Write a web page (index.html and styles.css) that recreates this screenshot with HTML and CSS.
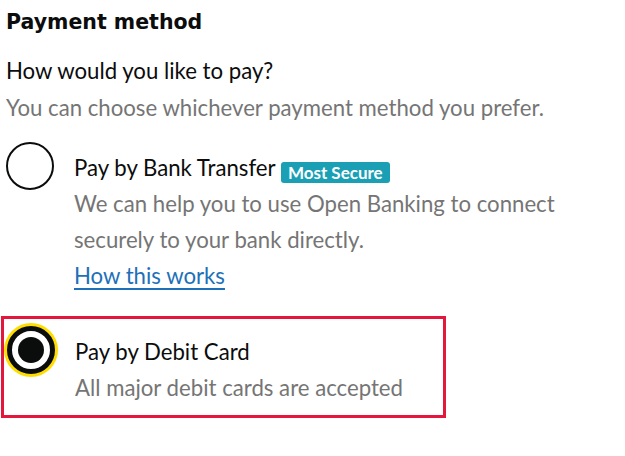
FILE: index.html
```html
<!DOCTYPE html>
<html lang="en">
<head>
  <meta charset="UTF-8" />
  <meta name="viewport" content="width=device-width, initial-scale=1.0"/>
  <title>Payment method</title>
  <link rel="stylesheet" href="styles.css">
</head>
<body>
  <div class="page">
    <h2 class="title">Payment method</h2>
    <p class="question">How would you like to pay?</p>
    <p class="hint">You can choose whichever payment method you prefer.</p>

    <div class="radios">
      <label class="radio">
        <span class="radio-mark"></span>
        <span class="radio-body">
          <span class="radio-label">Pay by Bank Transfer <span class="tag">Most Secure</span></span>
          <span class="radio-hint">We can help you to use Open Banking to connect securely to your bank directly.</span>
          <a class="link" href="#">How this works</a>
        </span>
      </label>

      <label class="radio is-selected">
        <span class="radio-mark"></span>
        <span class="radio-body">
          <span class="radio-label">Pay by Debit Card</span>
          <span class="radio-hint">All major debit cards are accepted</span>
        </span>
      </label>
    </div>
  </div>
</body>
</html>
```

FILE: styles.css
```css
* {
  margin: 0; padding: 0;
  box-sizing: border-box;
}

body {
  font-family: 'Lato', 'Noto Sans', sans-serif;
  color: #0b0c0c;
  background: #fff;
}

.page {
  padding: 8px 6px;
}

.title {
  font-family: 'DejaVu Sans', sans-serif;
  font-weight: bold;
  font-size: 20.5px;
  line-height: 28px;
}

.question {
  margin-top: 17px;
  font-size: 22.2px;
  line-height: 36px;
}

.hint {
  margin-top: 1px;
  font-size: 22.2px;
  line-height: 36px;
  color: #757575;
}

.radios {
  margin-top: 16px;
}

.radio {
  display: flex;
  align-items: flex-start;
  cursor: pointer;
}

.radio + .radio {
  margin-top: 22px;
}

.radio-mark {
  flex: none;
  width: 48px;
  height: 48px;
  border: 2px solid #0b0c0c;
  border-radius: 50%;
  background: #fff;
  position: relative;
}

.radio-body {
  display: flex;
  flex-direction: column;
  align-items: flex-start;
  padding-left: 20px;
  padding-top: 8px;
  max-width: 510px;
  font-size: 22.2px;
  line-height: 36px;
}

.radio-hint {
  color: #757575;
}

.tag {
  display: inline-block;
  vertical-align: -3px;
  background: #1a9fb5;
  color: #fff;
  font-weight: bold;
  font-size: 17px;
  line-height: 21px;
  padding: 0 7px;
  border-radius: 3px;
}

.link {
  color: #1d70b8;
  text-decoration: underline;
  text-decoration-thickness: 2px;
  text-underline-offset: 4px;
}

.is-selected {
  width: 445px;
  margin-left: -5px;
  border: 3px solid #e4163c;
  padding: 7px 3px 9px;
}

.is-selected .radio-mark {
  border-width: 5px;
  box-shadow: 0 0 0 3px #ffdd00;
}

.is-selected .radio-mark::after {
  content: "";
  position: absolute;
  top: 6px;
  left: 6px;
  width: 26px;
  height: 26px;
  border-radius: 50%;
  background: #0b0c0c;
}

.is-selected .radio-body {
  padding-top: 8px;
}
```
